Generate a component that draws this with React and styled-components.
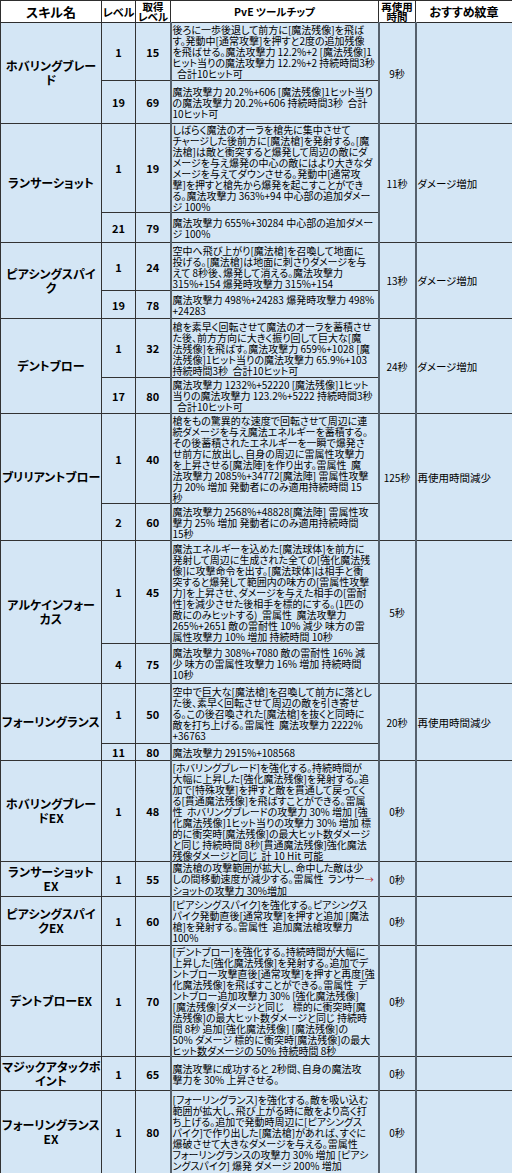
import React from 'react';
import styled, { createGlobalStyle } from 'styled-components';

const GlobalStyle = createGlobalStyle`
  html, body {
    margin: 0;
    padding: 0;
    background: #fff;
  }
  body {
    font-family: "Noto Sans CJK JP", "Noto Sans", sans-serif;
    color: #000;
  }
`;

const skills = [
  {
    name: ['ホバリングブレー', 'ド'], cool: '9秒', rec: '',
    levels: [
      { lv: '1', get: '15', h: 58, tip: [
        '後ろに一歩後退して前方に[魔法残像]を飛ば',
        'す。発動中[通常攻撃]を押すと2度の追加残像',
        'を飛ばせる。魔法攻撃力 12.2%+2 [魔法残像]1',
        'ヒット当りの魔法攻撃力 12.2%+2 持続時間3秒',
        '  合計10ヒット可',
      ] },
      { lv: '19', get: '69', h: 43, tip: [
        '魔法攻撃力 20.2%+606 [魔法残像]1ヒット当り',
        'の魔法攻撃力 20.2%+606 持続時間3秒  合計',
        '10ヒット可',
      ] },
    ],
  },
  {
    name: ['ランサーショット'], cool: '11秒', rec: 'ダメージ増加',
    levels: [
      { lv: '1', get: '19', h: 89, tip: [
        'しばらく魔法のオーラを槍先に集中させて',
        'チャージした後前方に[魔法槍]を発射する。[魔',
        '法槍]は敵と衝突すると爆発して周辺の敵にダ',
        'メージを与え爆発の中心の敵にはより大きなダ',
        'メージを与えてダウンさせる。発動中[通常攻',
        '撃]を押すと槍先から爆発を起こすことができ',
        'る。魔法攻撃力 363%+94 中心部の追加ダメー',
        'ジ 100%',
      ] },
      { lv: '21', get: '79', h: 30, tip: [
        '魔法攻撃力 655%+30284 中心部の追加ダメー',
        'ジ 100%',
      ] },
    ],
  },
  {
    name: ['ピアシングスパイ', 'ク'], cool: '13秒', rec: 'ダメージ増加',
    levels: [
      { lv: '1', get: '24', h: 48, tip: [
        '空中へ飛び上がり[魔法槍]を召喚して地面に',
        '投げる。[魔法槍]は地面に刺さりダメージを与',
        'えて 8秒後、爆発して消える。魔法攻撃力',
        '315%+154 爆発時攻撃力 315%+154',
      ] },
      { lv: '19', get: '78', h: 28, tip: [
        '魔法攻撃力 498%+24283 爆発時攻撃力 498%',
        '+24283',
      ] },
    ],
  },
  {
    name: ['デントブロー'], cool: '24秒', rec: 'ダメージ増加',
    levels: [
      { lv: '1', get: '32', h: 59, tip: [
        '槍を素早く回転させて魔法のオーラを蓄積させ',
        'た後、前方方向に大きく振り回して巨大な[魔',
        '法残像]を飛ばす。魔法攻撃力 659%+1028 [魔',
        '法残像]1ヒット当りの魔法攻撃力 65.9%+103',
        '持続時間3秒  合計10ヒット可',
      ] },
      { lv: '17', get: '80', h: 36, tip: [
        '魔法攻撃力 1232%+52220 [魔法残像]1ヒット',
        '当りの魔法攻撃力 123.2%+5222 持続時間3秒',
        '  合計10ヒット可',
      ] },
    ],
  },
  {
    name: ['ブリリアントブロー'], cool: '125秒', rec: '再使用時間減少',
    levels: [
      { lv: '1', get: '40', h: 90, tip: [
        '槍をもの驚異的な速度で回転させて周辺に連',
        '続ダメージを与え魔法エネルギーを蓄積する。',
        'その後蓄積されたエネルギーを一瞬で爆発さ',
        'せ前方に放出し、自身の周辺に雷属性攻撃力',
        'を上昇させる[魔法陣]を作り出す。雷属性  魔',
        '法攻撃力 2085%+34772[魔法陣] 雷属性攻撃',
        '力 20% 増加 発動者にのみ適用持続時間 15',
        '秒',
      ] },
      { lv: '2', get: '60', h: 37, tip: [
        '魔法攻撃力 2568%+48828[魔法陣] 雷属性攻',
        '撃力 25% 増加 発動者にのみ適用持続時間',
        '15秒',
      ] },
    ],
  },
  {
    name: ['アルケインフォー', 'カス'], cool: '5秒', rec: '',
    levels: [
      { lv: '1', get: '45', h: 103, tip: [
        '魔法エネルギーを込めた[魔法球体]を前方に',
        '発射して周辺に生成された全ての[強化魔法残',
        '像]に攻撃命令を出す。[魔法球体]は相手と衝',
        '突すると爆発して範囲内の味方の[雷属性攻撃',
        '力]を上昇させ、ダメージを与えた相手の[雷耐',
        '性]を減少させた後相手を標的にする。(1匹の',
        '敵にのみヒットする)  雷属性  魔法攻撃力',
        '265%+2651 敵の雷耐性 10% 減少 味方の雷',
        '属性攻撃力 10% 増加 持続時間 10秒',
      ] },
      { lv: '4', get: '75', h: 40, tip: [
        '魔法攻撃力 308%+7080 敵の雷耐性 16% 減',
        '少 味方の雷属性攻撃力 16% 増加 持続時間',
        '10秒',
      ] },
    ],
  },
  {
    name: ['フォーリングランス'], cool: '20秒', rec: '再使用時間減少',
    levels: [
      { lv: '1', get: '50', h: 60, tip: [
        '空中で巨大な[魔法槍]を召喚して前方に落とし',
        'た後、素早く回転させて周辺の敵を引き寄せ',
        'る。この後召喚された[魔法槍]を抜くと同時に',
        '敵を打ち上げる。雷属性  魔法攻撃力 2222%',
        '+36763',
      ] },
      { lv: '11', get: '80', h: 15, tip: [
        '魔法攻撃力 2915%+108568',
      ] },
    ],
  },
  {
    name: ['ホバリングブレー', 'ドEX'], cool: '0秒', rec: '',
    levels: [
      { lv: '1', get: '48', h: 101, tip: [
        '[ホバリングブレード]を強化する。持続時間が',
        '大幅に上昇した[強化魔法残像]を発射する。追',
        '加で[特殊攻撃]を押すと敵を貫通して戻ってく',
        'る[貫通魔法残像]を飛ばすことができる。雷属',
        '性  ホバリングブレードの攻撃力 30% 増加 [強',
        '化魔法残像]1ヒット当りの攻撃力 30% 増加 標',
        '的に衝突時[魔法残像]の最大ヒット数ダメージ',
        'と同じ 持続時間 8秒[貫通魔法残像]強化魔法',
        '残像ダメージと同じ  計 10 Hit 可能',
      ] },
    ],
  },
  {
    name: ['ランサーショット', 'EX'], cool: '0秒', rec: '',
    levels: [
      { lv: '1', get: '55', h: 34, arrow: true, tip: [
        '魔法槍の攻撃範囲が拡大し、命中した敵は少',
        'しの間移動速度が減少する。雷属性  ランサー',
        'ショットの攻撃力 30%増加',
      ] },
    ],
  },
  {
    name: ['ピアシングスパイ', 'クEX'], cool: '0秒', rec: '',
    levels: [
      { lv: '1', get: '60', h: 49, tip: [
        '[ピアシングスパイク]を強化する。ピアシングス',
        'パイク発動直後[通常攻撃]を押すと追加 [魔法',
        '槍]を発射する。雷属性  追加魔法槍攻撃力',
        '100%',
      ] },
    ],
  },
  {
    name: ['デントブローEX'], cool: '0秒', rec: '',
    levels: [
      { lv: '1', get: '70', h: 111, tip: [
        '[デントブロー]を強化する。持続時間が大幅に',
        '上昇した[強化魔法残像]を発射する。追加でデ',
        'ントブロー攻撃直後[通常攻撃]を押すと再度[強',
        '化魔法残像]を飛ばすことができる。雷属性  デ',
        'ントブロー追加攻撃力 30% [強化魔法残像]',
        '[魔法残像]ダメージと同じ    標的に衝突時[魔',
        '法残像]の最大ヒット数ダメージと同じ 持続時',
        '間 8秒 追加[強化魔法残像] [魔法残像]の',
        '50% ダメージ 標的に衝突時[魔法残像]の最大',
        'ヒット数ダメージの 50% 持続時間 8秒',
      ] },
    ],
  },
  {
    name: ['マジックアタックポ', 'イント'], cool: '0秒', rec: '',
    levels: [
      { lv: '1', get: '65', h: 34, tip: [
        '魔法攻撃に成功すると 2秒間、自身の魔法攻',
        '撃力を 30% 上昇させる。',
      ] },
    ],
  },
  {
    name: ['フォーリングランス', 'EX'], cool: '0秒', rec: '',
    levels: [
      { lv: '1', get: '80', h: 83, tip: [
        '[フォーリングランス]を強化する。敵を吸い込む',
        '範囲が拡大し、飛び上がる時に敵をより高く打',
        'ち上げる。追加で発動時周辺に[ピアシングス',
        'パイク]で作り出した[魔法槍]があれば、すぐに',
        '爆破させて大きなダメージを与える。雷属性',
        'フォーリングランスの攻撃力 30% 増加 [ピアシ',
        'ングスパイク] 爆発 ダメージ 200% 増加',
      ] },
    ],
  },
];

const Table = styled.table`
  width: 512px;
  border-collapse: collapse;
  table-layout: fixed;
  font-feature-settings: "palt";
`;

const HeadRow = styled.tr`
  height: 22px;
  background: #fff;
`;

const Th = styled.th`
  border: 1px solid #2e2e2e;
  padding: 0;
  font-size: ${p => p.$size || 11}px;
  line-height: ${p => (p.$two ? 10 : 14)}px;
  font-weight: 700;
  text-align: center;
  vertical-align: middle;
  white-space: nowrap;
`;

const Row = styled.tr`
  height: ${p => p.$h}px;
  background: #d4e6f5;
`;

const Cell = styled.td`
  border: 1px solid #333;
  padding: 0 1px;
  vertical-align: middle;
  overflow: hidden;
`;

const Name = styled(Cell)`
  text-align: center;
  font-size: 12px;
  font-weight: 700;
  line-height: 14px;
`;

const Num = styled(Cell)`
  text-align: center;
  font-size: 11px;
  font-weight: 700;
`;

const Tip = styled(Cell)`
  border-left: 2px solid #56616c;
  border-right: 2px solid #56616c;
  font-size: 10px;
  line-height: 11px;
`;

const Line = styled.div`
  white-space: pre;
`;

const Cool = styled(Cell)`
  border-right: 2px solid #56616c;
  text-align: center;
  font-size: 10px;
`;

const Rec = styled(Cell)`
  text-align: left;
  font-size: 10.5px;
  white-space: nowrap;
`;

const NameLine = styled.div`
  white-space: nowrap;
`;

const Arrow = styled.span`
  color: #b02a2a;
  font-size: 9px;
`;

export default function App() {
  return (
    <>
      <GlobalStyle />
      <Table>
        <colgroup>
          <col style={{ width: 101 }} />
          <col style={{ width: 34 }} />
          <col style={{ width: 35 }} />
          <col style={{ width: 208 }} />
          <col style={{ width: 37 }} />
          <col style={{ width: 97 }} />
        </colgroup>
        <thead>
          <HeadRow>
            <Th $size={13}>スキル名</Th>
            <Th $size={11}>レベル</Th>
            <Th $size={10.5} $two>取得<br />レベル</Th>
            <Th $size={10.5}>PvE ツールチップ</Th>
            <Th $size={10.5} $two>再使用<br />時間</Th>
            <Th $size={12}>おすすめ紋章</Th>
          </HeadRow>
        </thead>
        <tbody>
          {skills.map((s) =>
            s.levels.map((l, i) => (
              <Row key={s.name.join('') + l.lv} $h={l.h}>
                {i === 0 && (
                  <Name rowSpan={s.levels.length}>
                    {s.name.map((n) => <NameLine key={n}>{n}</NameLine>)}
                  </Name>
                )}
                <Num>{l.lv}</Num>
                <Num>{l.get}</Num>
                <Tip>
                  {l.tip.map((t, k) => (
                    <Line key={k}>
                      {t}
                      {l.arrow && k === 1 ? <Arrow>→</Arrow> : null}
                    </Line>
                  ))}
                </Tip>
                {i === 0 && <Cool rowSpan={s.levels.length}>{s.cool}</Cool>}
                {i === 0 && <Rec rowSpan={s.levels.length}>{s.rec}</Rec>}
              </Row>
            ))
          )}
        </tbody>
      </Table>
    </>
  );
}
